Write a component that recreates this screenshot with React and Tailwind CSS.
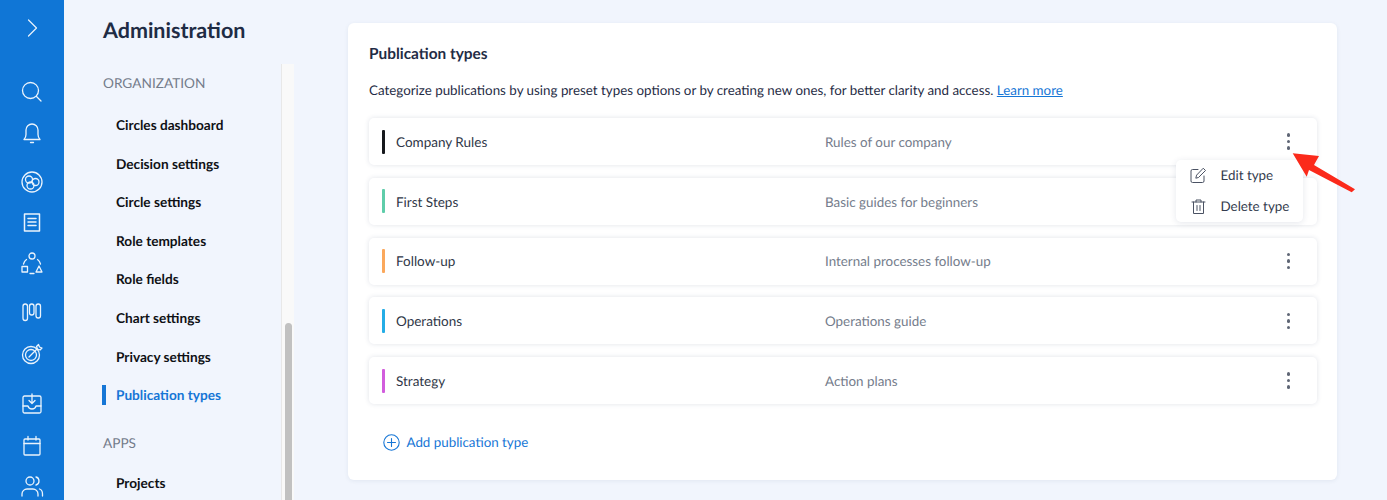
const font = { fontFamily: "Lato, sans-serif" };

const I = ({ children, className = "", w = 24, h = 24, vb = "0 0 24 24", sw = 1.3 }) => (
  <svg width={w} height={h} viewBox={vb} fill="none" stroke="currentColor" strokeWidth={sw} strokeLinecap="round" strokeLinejoin="round" className={className}>{children}</svg>
);

const railIcons = [
  { mt: "mt-[40px]", el: <I><circle cx="10.500" cy="10.500" r="8" /><path d="M16.500 16.500l4.500 4.500" /></I> },
  { mt: "mt-[16px]", el: <I><path d="M4 19.500c1.500-1.500 2-2.500 2-5V10a6 6 0 0 1 12 0v4.500c0 2.500.5 3.500 2 5H4z" /><path d="M10.500 22.500h3" /></I> },
  { mt: "mt-[26px]", el: <I><circle cx="12" cy="12" r="10" /><circle cx="9" cy="9.500" r="3.500" /><circle cx="15.500" cy="12" r="3.500" /><circle cx="10.500" cy="15.500" r="3.500" /></I> },
  { mt: "mt-[16px]", el: <I sw="1.500"><rect x="4.500" y="4" width="15" height="17" /><path d="M8 8.500h8M8 12h8M8 15.500h8" /></I> },
  { mt: "mt-[18px]", el: <I><circle cx="12" cy="4" r="3" /><rect x="2" y="14.500" width="5.500" height="5.500" /><path d="M19 14l3 6h-6z" /><path d="M3.500 12c.5-2 1.500-3.500 3-4.500M20.500 12c-.5-2-1.500-3.500-3-4.500M10 21.500h4" /></I> },
  { mt: "mt-[24px]", el: <I><rect x="3" y="4" width="4.500" height="16.500" rx="2.200" /><rect x="9.500" y="4" width="4.500" height="11" rx="2.200" /><rect x="16" y="4" width="4.500" height="14" rx="2.200" /></I> },
  { mt: "mt-[18px]", el: <I><circle cx="11" cy="13" r="8.500" /><circle cx="11" cy="13" r="5.500" /><path d="M9 15l8-8M16.500 4.500l2-2 1 2.500 2.500 1-2 2-2.500-1z" /></I> },
  { mt: "mt-[26px]", el: <I><rect x="3" y="4" width="18" height="17" rx="1.500" /><path d="M3 14h5c.5 2 2 3 4 3s3.500-1 4-3h5" /><path d="M12 2v9M9 8.500l3 3 3-3" /></I> },
  { mt: "mt-[18px]", el: <I><rect x="4" y="5" width="16" height="16" rx="1" /><path d="M4 9.500h16M8 2.500V6M16 2.500V6" /></I> },
  { mt: "mt-[16px]", el: <I><circle cx="10" cy="7" r="4" /><path d="M2 22v-2c0-3 2.500-5 5-5h6c2.500 0 5 2 5 5v2" /><path d="M16 3c2 .5 3 2 3 4s-1 3.500-3 4M19.500 15c1.500.5 3 2.500 3 5v2" /></I> },
];

const nav = ["Circles dashboard", "Decision settings", "Circle settings", "Role templates", "Role fields", "Chart settings", "Privacy settings"];

const rows = [
  ["Company Rules", "Rules of our company", "bg-[#16181d]"],
  ["First Steps", "Basic guides for beginners", "bg-[#5fcdaa]"],
  ["Follow-up", "Internal processes follow-up", "bg-[#fba85c]"],
  ["Operations", "Operations guide", "bg-[#24ade6]"],
  ["Strategy", "Action plans", "bg-[#d25ddd]"],
];

const NavItem = ({ children, active }) => (
  <div className={`h-[38.600px] flex items-center pl-[13px] text-[13.650px] font-bold ${active ? "text-[#1676d6]" : "text-[#0f1115]"} relative`}>
    {active && <span className="absolute -left-px top-[9px] w-1 h-[20px] bg-[#1676d6]" />}
    {children}
  </div>
);

export default function App() {
  return (
    <div style={font} className="relative h-[500px] w-[1387px] overflow-hidden flex bg-[#f1f5fd] [text-rendering:geometricPrecision]">
      <aside className="w-16 shrink-0 h-full bg-[#1076d6] text-[#eaf3fc] flex flex-col items-center overflow-hidden">
        <div className="pt-[16px] h-[40px] shrink-0 -ml-[1px]">
          <svg width="24" height="24" viewBox="0 0 24 24" fill="none" stroke="currentColor" strokeWidth="1.200" strokeLinecap="round" strokeLinejoin="round"><path d="M8.500 4l8 8-8 8" /></svg>
        </div>
        {railIcons.map((r, i) => (
          <div key={i} className={`${r.mt} shrink-0 h-6`}>{r.el}</div>
        ))}
      </aside>

      <div className="w-[217px] shrink-0 pl-[39px]">
        <h1 className="pt-[15px] text-[21.500px] leading-[30px] font-bold text-[#1f2c45] whitespace-nowrap">Administration</h1>
        <div className="mt-[28px] text-[13.650px] leading-5 text-[#747c8b]">ORGANIZATION</div>
        <div className="mt-[13px]">
          {nav.map((n) => <NavItem key={n}>{n}</NavItem>)}
          <NavItem active>Publication types</NavItem>
        </div>
        <div className="mt-[18px] text-[13.650px] leading-5 text-[#747c8b]">APPS</div>
        <div className="mt-[11px]"><NavItem>Projects</NavItem></div>
      </div>

      <div className="mt-16 w-[13px] shrink-0 bg-[#f9f9f9] border-l border-[#e8e8e8] pl-[3px] pt-[259px]">
        <div className="w-[7px] h-[200px] rounded-full bg-[#c1c1c1]" />
      </div>

      <main className="pl-[54px] pt-[23px]">
        <section className="w-[989px] h-[457px] bg-white rounded-[6px] shadow-[0_1px_4px_rgba(40,60,100,0.08)] pl-[21px] pr-[20px]">
          <h2 className="pt-[21px] text-[15.400px] leading-5 font-bold text-[#1f2c45]">Publication types</h2>
          <p className="mt-[16px] text-[13.360px] leading-5 text-[#1f2c45]">
            Categorize publications by using preset types options or by creating new ones, for better clarity and access.{" "}
            <span className="text-[#1676d6] underline">Learn more</span>
          </p>
          <div className="mt-[18px] flex flex-col gap-[12.750px]">
            {rows.map(([name, desc, c]) => (
              <div key={name} className="h-[47px] rounded-[5px] bg-white shadow-[0_0_5px_rgba(40,60,100,0.14)] flex items-center pl-[13px]">
                <span className={`w-[3px] h-[24px] rounded-[1px] ${c}`} />
                <span className="ml-[11px] w-[429px] pt-px text-[13.500px] text-[#2f3747]">{name}</span>
                <span className="flex-1 pt-px text-[13.400px] text-[#747c8b]">{desc}</span>
                <span className="w-[57px] flex flex-col items-center gap-[3px]">
                  <i className="w-[3.500px] h-[3.500px] rounded-full bg-[#5f6675]" />
                  <i className="w-[3.500px] h-[3.500px] rounded-full bg-[#5f6675]" />
                  <i className="w-[3.500px] h-[3.500px] rounded-full bg-[#5f6675]" />
                </span>
              </div>
            ))}
          </div>
          <div className="mt-[28px] ml-[14px] flex items-center gap-[6.500px] text-[#1676d6] text-[13.350px]">
            <svg width="17" height="17" viewBox="0 0 17 17" fill="none" stroke="currentColor" strokeWidth="1.100" strokeLinecap="round"><circle cx="8.500" cy="8.500" r="7.700" /><path d="M8.500 4.500v8M4.500 8.500h8" /></svg>
            <span>Add publication type</span>
          </div>
        </section>
      </main>

      <div className="absolute left-[1176px] top-[160px] w-[127px] h-[62px] bg-white rounded-[5px] shadow-[0_1px_6px_rgba(40,60,100,0.12)] flex flex-col text-[13.400px] text-[#343c4e]">
        <div className="h-[30px] flex items-center pl-[14px] gap-[13.500px]">
          <svg width="17" height="17" viewBox="0 0 17 17" fill="none" stroke="#4a5263" strokeWidth="1" strokeLinecap="round" strokeLinejoin="round"><path d="M8 2.500H2.500a1.500 1.500 0 0 0-1.500 1.500v10a1.500 1.500 0 0 0 1.500 1.500h10a1.500 1.500 0 0 0 1.500-1.500V9" /><path d="M13.500 1.500l2 2-7 7-2.700.7.700-2.700z" /></svg>
          <span>Edit type</span>
        </div>
        <div className="h-[32px] flex items-center pl-[14px] gap-[13.500px]">
          <svg width="17" height="17" viewBox="0 0 17 17" fill="none" stroke="#4a5263" strokeWidth="1" strokeLinecap="round" strokeLinejoin="round"><path d="M2 4h13M6 4V2h5v2M3.500 4v11.500h10V4M7 7.500v5M10 7.500v5" /></svg>
          <span>Delete type</span>
        </div>
      </div>

      <svg className="absolute left-[1290px] top-[150px]" width="70" height="50" viewBox="0 0 70 50" fill="none">
        <path d="M2.700 3.300L29 6 24 15 65 39.300 61.700 42.300 19 20 16.700 26.700z" fill="#fb2a1b" />
      </svg>
    </div>
  );
}
